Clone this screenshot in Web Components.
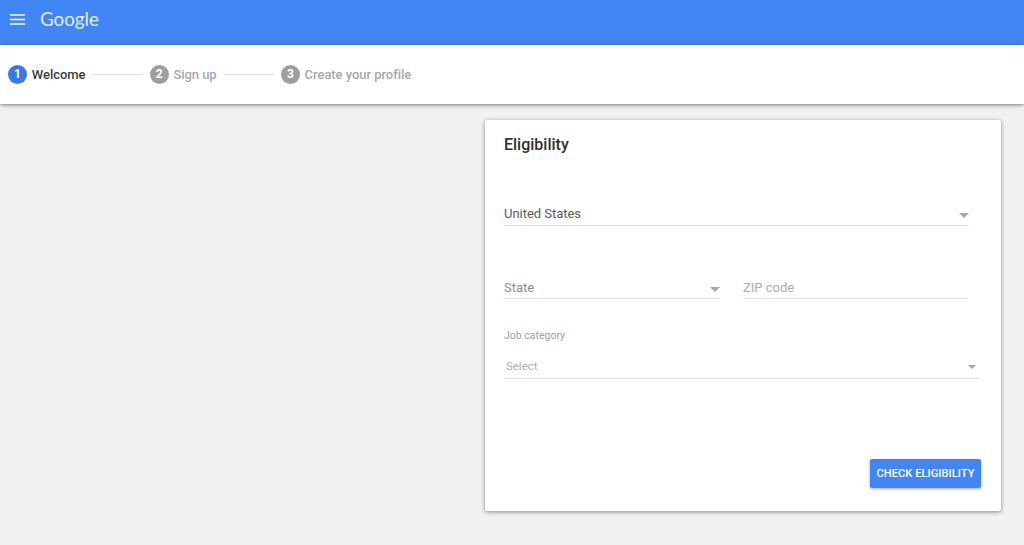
<!DOCTYPE html>
<html><head><meta charset="utf-8"><title>Eligibility</title>
<style>
html,body{margin:0;padding:0;height:545px;overflow:hidden;background:#f1f1f1;font-family:Roboto,"Liberation Sans",sans-serif}
</style></head><body>
<app-header></app-header>
<step-bar>
<step-item n="1" active>Welcome</step-item>
<step-item n="2">Sign up</step-item>
<step-item n="3">Create your profile</step-item>
</step-bar>
<main-area>
<eligibility-card></eligibility-card>
</main-area>
<script>
function def(name,html,init){customElements.define(name,class extends HTMLElement{constructor(){super();this.attachShadow({mode:'open'}).innerHTML=html;}connectedCallback(){init&&init(this)}})}
def('app-header',`<style>:host{display:flex;align-items:center;height:45px;background:#4285f4;box-sizing:border-box;padding:0 0 6px 10px}
svg{display:block;width:15px;height:11px}
span{margin-left:15px;color:#e3edfd;font:400 18.8px/26px Lato,sans-serif;margin-top:-2px}</style>
<svg viewBox="0 0 15 11"><path d="M0 1h15M0 5.5h15M0 10h15" stroke="#fff" stroke-width="1.4" fill="none"/></svg><span>Google</span>`);
def('step-bar',`<style>:host{display:flex;align-items:center;height:59px;background:#fff;padding:0 0 0 8px;box-sizing:border-box;position:relative;box-shadow:0 1px 4px rgba(0,0,0,.5)}</style><slot></slot>`);
def('step-item',`<style>:host{display:flex;align-items:center;font:500 13px/20px Roboto,sans-serif;letter-spacing:-.05px;color:#a8a8a8}
:host([active]){color:#3a3a3a}
.c{width:19px;height:19px;border-radius:50%;background:#9e9e9e;color:#fff;display:flex;align-items:center;justify-content:center;font:700 12px/19px Roboto,sans-serif;margin-right:4.8px}
:host([active]) .c{background:#3b78e7}
.l{width:50.2px;height:1px;background:#e0e0e0;margin:0 7px}
:host(:last-child) .l{display:none}</style><span class="c"></span><slot></slot><span class="l"></span>`,el=>{el.shadowRoot.querySelector('.c').textContent=el.getAttribute('n')});
def('main-area',`<style>:host{display:flex;justify-content:flex-start;padding:16px 0 0 485px}</style><slot></slot>`);
def('select-field',`<style>:host{display:flex;align-items:center;justify-content:space-between;box-sizing:border-box;border-bottom:1px solid #e3e3e3;font:400 13px/20px Roboto,sans-serif;letter-spacing:-.03px}
i{display:block;width:0;height:0;border-left:var(--a,5px) solid transparent;border-right:var(--a,5px) solid transparent;border-top:var(--a,5px) solid #a8a8a8;margin-top:2px}</style><slot></slot><i></i>`);
def('eligibility-card',`<style>:host{box-sizing:border-box;width:516px;height:391px;background:#fff;border-radius:2px;box-shadow:0 1px 4px rgba(0,0,0,.45);padding:14px 20px 23px 19px;color:#333;font-family:Roboto,sans-serif;display:flex;flex-direction:column}
h2{margin:0;font:500 16px/22px Roboto,sans-serif;color:#2f2f2f}
.country{width:465px;height:23px;margin-top:47px;color:#5a5a5a}
.row{display:flex;gap:23px;margin-top:50px}
.state{width:216px;height:23px;padding-top:2px;color:#8c8c8c}
.zip{width:225px;height:23px;box-sizing:border-box;border-bottom:1px solid #e3e3e3;font:400 13px/24px Roboto,sans-serif;color:#adadad}
.lab{margin-top:30px;font:400 10.5px/14px Roboto,sans-serif;color:#a0a0a0}
.job{width:476px;height:25px;margin:11px 0 0 0;padding:0 4px 0 2px;font-size:11.5px;color:#aeaeae;--a:4.5px;align-self:flex-start;position:relative;left:0}
.btn{align-self:flex-end;margin-top:auto;width:111px;height:29px;box-sizing:border-box;background:#4285f4;color:#fff;border:0;border-radius:2px;box-shadow:0 1px 3px rgba(0,0,0,.35);font:500 11.2px/29px Roboto,sans-serif;padding:0;text-align:center;text-transform:uppercase}</style>
<h2>Eligibility</h2>
<select-field class="country">United States</select-field>
<div class="row"><select-field class="state">State</select-field><div class="zip">ZIP code</div></div>
<div class="lab">Job category</div>
<select-field class="job">Select</select-field>
<button class="btn">Check eligibility</button>`);
</script>
</body></html>
